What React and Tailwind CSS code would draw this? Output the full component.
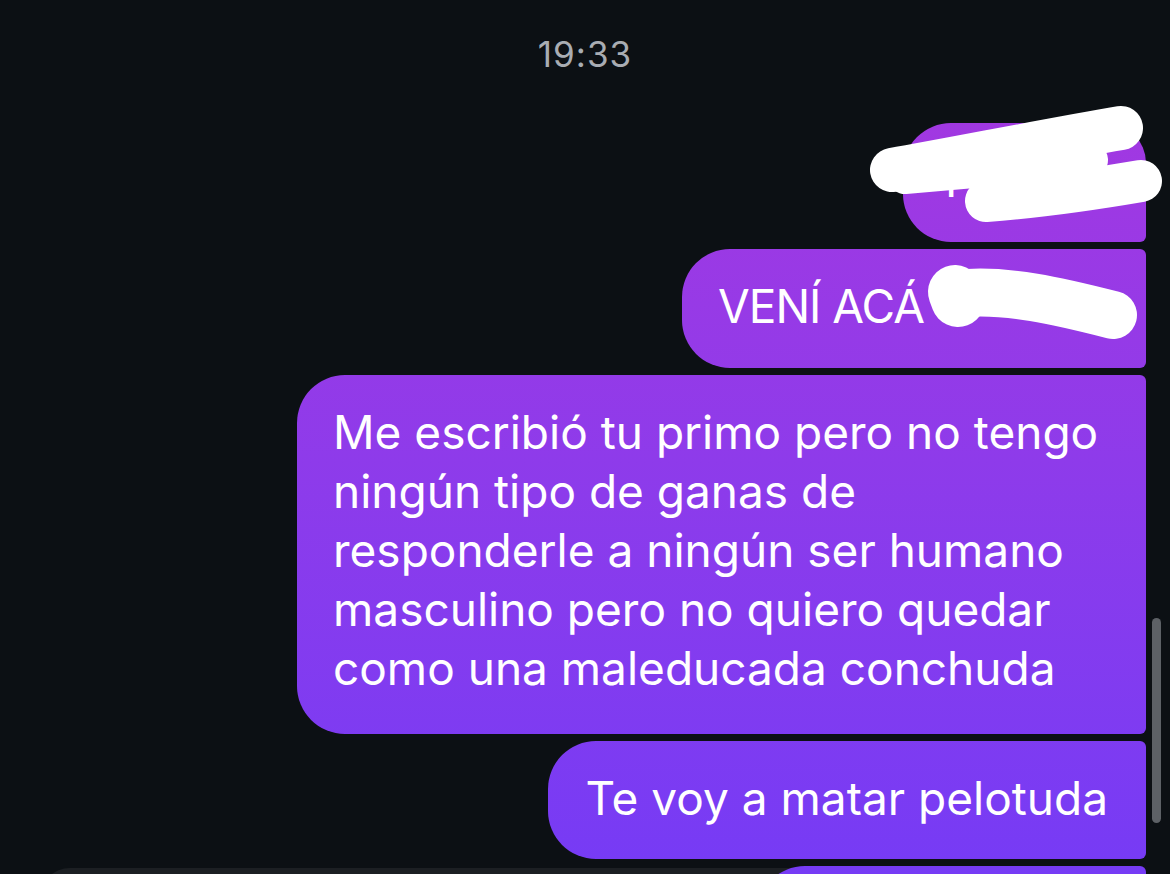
import React from "react";

const bubble =
  "relative z-10 bg-linear-to-b from-[#a836de] to-[#763bf5] bg-fixed text-white rounded-l-[48px] rounded-r-[6px]";

function App() {
  const lines = [
    "Me escribió tu primo pero no tengo",
    "ningún tipo de ganas de",
    "responderle a ningún ser humano",
    "masculino pero no quiero quedar",
    "como una maleducada conchuda",
  ];

  return (
    <div
      className="relative h-[874px] w-[1170px] overflow-hidden bg-[#0c1014]"
      style={{ fontFamily: "Inter, 'Noto Sans', sans-serif" }}
    >
      {/* hora */}
      <p className="pt-[33px] text-center text-[35px] leading-[42px] tracking-[1px] text-[#a9adb3]">
        19:33
      </p>

      {/* mensajes */}
      <div className="mt-[48px] flex flex-col items-end gap-[7px] pr-[24px] text-[46px] leading-[59px]">
        <div className={bubble + " h-[119px] w-[243px] rounded-tr-[40px] pl-[42px] pt-[28px]"}>
          <span>I</span>
        </div>
        <div className={bubble + " w-[464px] pl-[36px] pt-[28px] pb-[32px] tracking-[-1px]"}>
          VENÍ ACÁ
        </div>
        <div className={bubble + " w-[849px] pl-[36px] pt-[28px] pb-[36px]"}>
          {lines.map((l) => (
            <span key={l} className="block whitespace-nowrap">
              {l}
            </span>
          ))}
        </div>
        <div className={bubble + " pl-[38px] pr-[38px] pt-[28px] pb-[31px] whitespace-nowrap"}>
          Te voy a matar pelotuda
        </div>
        <div className={bubble + " h-[118px] w-[389px] rounded-tr-[6px]"}></div>
      </div>

      {/* barra de escribir */}
      <div className="absolute left-[40px] right-[30px] top-[868px] h-[60px] rounded-full bg-[#1c1f23]"></div>

      {/* scroll */}
      <div className="absolute left-[1152px] top-[618px] h-[205px] w-[9px] rounded-full bg-[#5d6166]"></div>

      {/* tachones */}
      <svg
        className="pointer-events-none absolute inset-0 z-20"
        width="1170"
        height="874"
        viewBox="0 0 1170 874"
      >
        <g stroke="#ffffff" strokeLinecap="round" strokeLinejoin="round" fill="none">
          <path d="M892 170 C 960 158, 1050 140, 1121 128" strokeWidth="44" />
          <path d="M905 176 L 1090 160" strokeWidth="36" />
          <path d="M986 201 C 1040 197, 1100 188, 1141 181" strokeWidth="42" />
          <path d="M956 294 C 1005 288, 1062 302, 1113 315" strokeWidth="48" />
          <path d="M955 292 L 958 300" strokeWidth="54" />
        </g>
      </svg>
    </div>
  );
}

export default App;
